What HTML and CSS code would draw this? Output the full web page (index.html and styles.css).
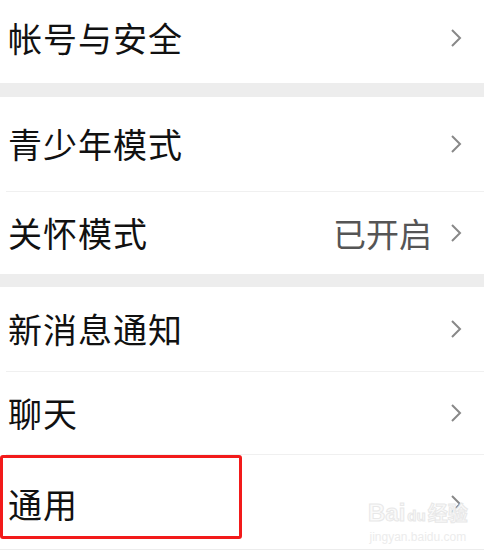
FILE: index.html
```html
<!DOCTYPE html>
<html lang="zh-CN">
<head>
    <meta charset="UTF-8">
    <title>设置</title>
    <link rel="stylesheet" href="styles.css">
</head>
<body>
    <div class="group">
        <div class="row first">
            <span class="label">帐号与安全</span>
            <svg class="arrow" width="12" height="20" viewBox="0 0 12 20"><polyline points="2,2 10,10 2,18"/></svg>
        </div>
    </div>
    <div class="gap"></div>
    <div class="group">
        <div class="row tall">
            <span class="label">青少年模式</span>
            <svg class="arrow" width="12" height="20" viewBox="0 0 12 20"><polyline points="2,2 10,10 2,18"/></svg>
        </div>
        <div class="row short">
            <span class="label">关怀模式</span>
            <span class="value">已开启</span>
            <svg class="arrow" width="12" height="20" viewBox="0 0 12 20"><polyline points="2,2 10,10 2,18"/></svg>
        </div>
    </div>
    <div class="gap small"></div>
    <div class="group last">
        <div class="row">
            <span class="label">新消息通知</span>
            <svg class="arrow" width="12" height="20" viewBox="0 0 12 20"><polyline points="2,2 10,10 2,18"/></svg>
        </div>
        <div class="row short">
            <span class="label">聊天</span>
            <svg class="arrow" width="12" height="20" viewBox="0 0 12 20"><polyline points="2,2 10,10 2,18"/></svg>
        </div>
        <div class="row tall mark">
            <span class="label">通用</span>
            <svg class="arrow" width="12" height="20" viewBox="0 0 12 20"><polyline points="2,2 10,10 2,18"/></svg>
            <div class="highlight"></div>
            <div class="watermark">
                <div class="wm-logo">Bai<span class="wm-du">du</span><span class="wm-cn">经验</span></div>
                <div class="wm-url">jingyan.baidu.com</div>
            </div>
        </div>
    </div>
</body>
</html>
```

FILE: styles.css
```css
*{
    margin: 0;
    padding: 0;
    box-sizing: border-box;
}
body{
    width: 484px;
    height: 552px;
    overflow: hidden;
    background: #fff;
    font-family: "Noto Sans CJK SC", "Noto Sans", sans-serif;
    color: #111;
}
.gap{
    height: 14px;
    background: #ededed;
}
.gap.small{
    height: 13px;
}
.row{
    display: flex;
    align-items: center;
    height: 84px;
    margin-left: 6px;
    padding-left: 2px;
    padding-right: 22px;
    position: relative;
}
.row + .row{
    border-top: 1px solid #f0f0f0;
}
.row.first{
    height: 83px;
    padding-bottom: 7px;
}
.row.tall{
    height: 94px;
}
.row.short{
    height: 83px;
}
.row.short + .row.tall{
    height: 95px;
    padding-top: 3px;
}
.last{
    border-bottom: 1px solid #ececec;
}
.label{
    flex: 1;
    font-size: 34px;
    letter-spacing: 1px;
    line-height: 1;
}
.value{
    font-size: 33px;
    color: #555;
    line-height: 1;
    margin-right: 18px;
}
.arrow{
    display: block;
    fill: none;
    stroke: #888;
    stroke-width: 2;
}
.highlight{
    position: absolute;
    left: -6px;
    top: 0;
    width: 242px;
    height: 84px;
    border: 3px solid #f21a1a;
    border-radius: 3px;
}
.watermark{
    position: absolute;
    left: 362px;
    top: 44px;
    color: #f0f0f0;
    font-family: "Liberation Sans", sans-serif;
    text-align: center;
}
.wm-logo{
    font-size: 24px;
    font-weight: bold;
    line-height: 28px;
    -webkit-text-stroke: 1px #e8e8e8;
    color: #fafafa;
}
.wm-du{
    font-size: 15px;
    margin: 0 2px;
}
.wm-cn{
    font-family: "Noto Sans CJK SC", sans-serif;
    font-size: 20px;
}
.wm-url{
    font-size: 12px;
    line-height: 14px;
    color: #ececec;
}
```
